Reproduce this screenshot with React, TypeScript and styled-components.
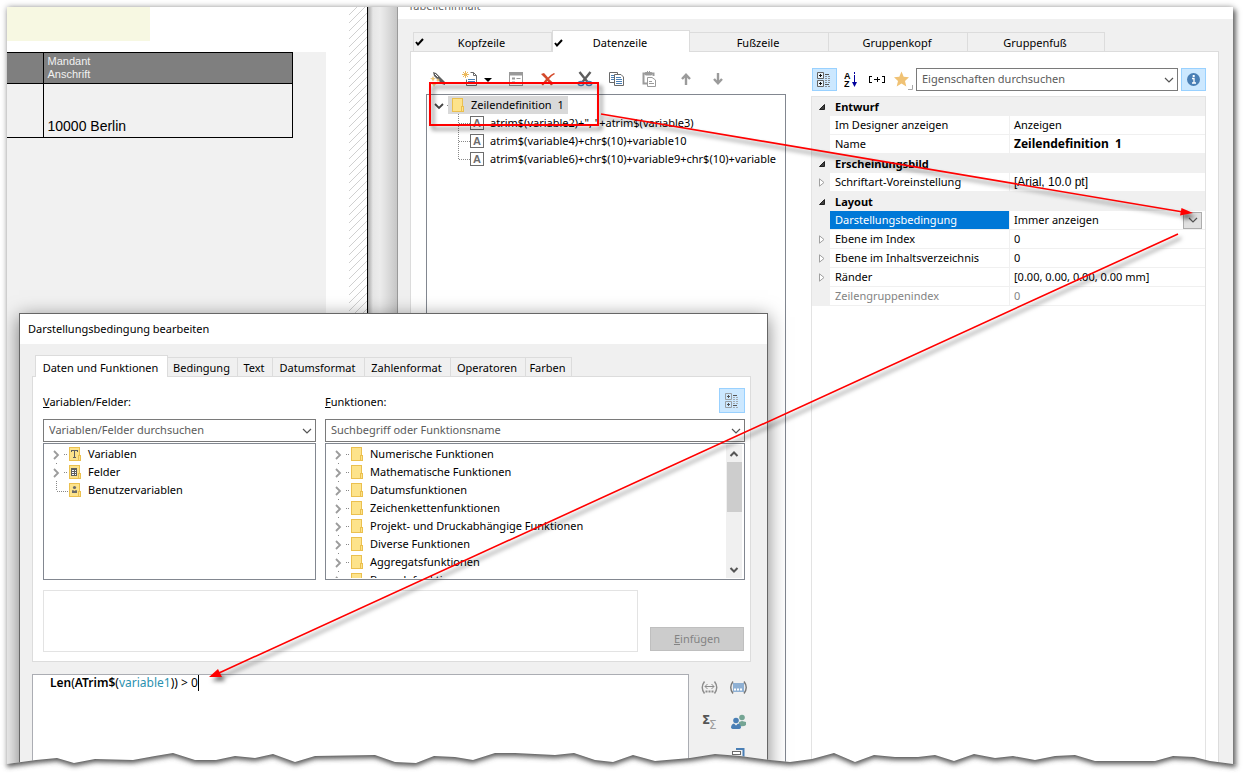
import React from 'react';
import styled, { createGlobalStyle, css } from 'styled-components';

const GlobalStyle = createGlobalStyle`
  *, *::before, *::after { box-sizing: border-box; }
  body { margin: 0; background: #fff; }
  body, button, input { font: 11px/16px 'Noto Sans', 'Open Sans', sans-serif; color: #000; }
  button { padding: 0; margin: 0; border: 0; background: none; cursor: default; }
  svg { display: block; flex: none; }
`;

/* ---------- page frame ---------- */

const Page = styled.div`
  position: relative;
  display: flex;
  height: 100vh;
  min-height: 700px;
  padding: 7px 12px 0 7px;
  overflow: hidden;
`;

const Capture = styled.main`
  position: relative;
  display: flex;
  flex: 1;
  min-width: 0;
  overflow: hidden;
`;

const Shade = styled.div`
  display: flex;
  flex: 1;
  min-width: 0;
  box-shadow: 0 0 6px rgba(0, 0, 0, 0.35), 3px 3px 5px rgba(0, 0, 0, 0.5);
`;

const TornEdge = styled.svg`
  position: absolute;
  left: 0;
  bottom: 0;
  width: 100%;
  height: 25px;
`;

const Annotations = styled.svg`
  position: absolute;
  left: 0;
  top: 0;
  width: 100%;
  height: 100%;
  pointer-events: none;
`;

/* ---------- report layout on the left ---------- */

const Report = styled.section`
  display: flex;
  flex: 0 0 361px;
  border-right: 1px solid #000;
  background: #fff;
  justify-content: space-between;
`;

const ReportSheet = styled.div`
  display: flex;
  flex-direction: column;
  width: 319px;
`;

const Highlight = styled.div`
  width: 143px;
  height: 34px;
  margin-bottom: 11px;
  background: #f7f8e2;
`;

const ReportBody = styled.div`
  flex: 1;
  background: #f1f1f1;
`;

const ReportTable = styled.table`
  width: 286px;
  border-collapse: collapse;
  font-family: 'Liberation Sans', Arial, sans-serif;
  th, td { border: 1px solid #000; padding: 0 4px; text-align: left; }
  th:first-child, td:first-child { width: 36px; border-left: 0; }
  th { height: 31px; padding-bottom: 1px; background: #7f7f7f; color: #f1f1f1; font: 11px/13px 'Liberation Sans', Arial, sans-serif; }
  td { height: 54px; padding-bottom: 3px; font-size: 14px; vertical-align: bottom; }
`;

const Gutter = styled.div`
  flex: 0 0 29px;
  background: linear-gradient(90deg, #a8a8a8, #e6e6e6 5px, #ececec 12px, #e0e0e0 18px, #c6c6c6);
`;

/* ---------- shared controls ---------- */

const TabStrip = styled.div`
  display: flex;
  align-items: flex-end;
  padding-left: 3px;
`;

const Tab = styled.button<{ $active?: boolean; $width: number }>`
  position: relative;
  display: flex;
  align-items: center;
  justify-content: center;
  flex: 0 1 ${p => p.$width}px;
  height: ${p => (p.$active ? 22 : 19)}px;
  margin-bottom: ${p => (p.$active ? -1 : 0)}px;
  padding: 2px 2px 0 0;
  white-space: nowrap;
  border: 1px solid #dcdcdc;
  border-bottom: 0;
  border-left-width: ${p => (p.$active ? 1 : 0)}px;
  background: ${p => (p.$active ? '#fff' : '#f0f0f0')};
  &:first-child { border-left-width: 1px; }
`;

const TabCheck = styled.svg`
  position: absolute;
  left: 1px;
  bottom: 5px;
`;

const IconButton = styled.button<{ $on?: boolean; $w?: number; $h?: number; $gap?: number }>`
  display: flex;
  align-items: center;
  justify-content: center;
  flex: none;
  width: ${p => p.$w ?? 32}px;
  height: ${p => p.$h ?? 23}px;
  margin-left: ${p => p.$gap ?? 0}px;
  ${p => p.$on && css`
    background: #cce8ff;
    border: 1px solid #99d1ff;
  `}
`;

const Combo = styled.div`
  display: flex;
  align-items: center;
  flex: 1;
  min-width: 0;
  height: 23px;
  border: 1px solid #7a7a7a;
  background: #fff;
  input {
    flex: 1;
    min-width: 0;
    height: 20px;
    padding: 0 5px 2px;
    border: 0;
    outline: 0;
    background: none;
  }
  input::placeholder { color: #5a5a5a; opacity: 1; }
`;

const TreeBox = styled.div`
  display: flex;
  border: 1px solid #828790;
  background: #fff;
  padding: 1px 1px 1px 0;
  overflow: hidden;
`;

const TreeList = styled.ul`
  flex: 1;
  min-width: 0;
  margin: 0;
  padding: 0;
  list-style: none;
  overflow: hidden;
`;

const TreeRow = styled.li<{ $child?: boolean }>`
  display: flex;
  align-items: center;
  height: 18px;
  padding-left: ${p => (p.$child ? 25 : 6)}px;
  white-space: pre;
`;

const TreeLabel = styled.span<{ $selected?: boolean; $gap: number }>`
  display: flex;
  align-items: center;
  gap: ${p => p.$gap}px;
  height: 18px;
  margin-left: -4px;
  padding: 0 4px;
  background: ${p => (p.$selected ? '#d9d9d9' : 'transparent')};
`;

/* ---------- table content window ---------- */

const ContentWindow = styled.section`
  display: flex;
  flex-direction: column;
  flex: 1;
  min-width: 0;
  border-left: 1px solid #9a9a9a;
  background: #f0f0f0;
`;

const ClippedTitle = styled.header`
  display: flex;
  align-items: flex-end;
  height: 12px;
  padding: 0 10px 5px;
  overflow: hidden;
  background: #fff;
  color: #6a6a6a;
`;

const WindowBody = styled.div`
  display: flex;
  flex-direction: column;
  flex: 1;
  padding: 11px 14px 0 12px;
`;

const Pane = styled.div`
  display: flex;
  flex: 1;
  gap: 25px;
  padding: 16px 12px 0 15px;
  border: 1px solid #dcdcdc;
  border-bottom: 0;
  background: #fff;
`;

const LinesColumn = styled.div`
  display: flex;
  flex-direction: column;
  flex: 0 0 360px;
  min-width: 0;
`;

const PropsColumn = styled.div`
  display: flex;
  flex-direction: column;
  flex: 1;
  min-width: 0;
`;

const Toolbar = styled.div`
  display: flex;
  align-items: flex-start;
  height: 21px;
  margin: 0 0 5px -4px;
`;

const PropToolbar = styled.div`
  display: flex;
  gap: 1px;
  margin-bottom: 5px;
  padding-left: 1px;
`;

const LinesTree = styled(TreeBox)`
  flex: 1;
`;

const PropBox = styled.div`
  flex: 1;
  border: 1px solid #e3e3e3;
  border-bottom: 0;
`;

const PropTable = styled.table`
  width: 100%;
  border-collapse: separate;
  border-spacing: 0;
  table-layout: fixed;
  td, th { height: 19px; padding: 0; text-align: left; white-space: pre; line-height: 16px; }
`;

const GutterCell = styled.td`
  width: 18px;
  background: #f0f0f0;
  svg { margin-left: 6px; }
`;

const GroupCell = styled.th`
  background: #f0f0f0;
  font-weight: 700;
  && { padding-left: 5px; }
`;

const NameCell = styled.td<{ $selected?: boolean; $dim?: boolean }>`
  width: 179px;
  border-bottom: 1px solid #f0f0f0;
  color: ${p => (p.$selected ? '#fff' : p.$dim ? '#838383' : '#000')};
  background: ${p => (p.$selected ? '#0078d7' : '#fff')};
  && { padding-left: 5px; }
`;

const ValueCell = styled.td<{ $bold?: boolean; $dim?: boolean; $arial?: boolean }>`
  border-bottom: 1px solid #f0f0f0;
  border-left: 1px solid #f0f0f0;
  color: ${p => (p.$dim ? '#838383' : '#000')};
  ${p => p.$bold && css`font-size: 12px; font-weight: 700;`}
  ${p => p.$arial && css`font: 12px/16px 'Liberation Sans', Arial, sans-serif;`}
  && { padding-left: 4px; }
`;

const ValueFlex = styled.div`
  display: flex;
  align-items: center;
  justify-content: space-between;
  padding-right: 3px;
  height: 18px;
`;

const DropButton = styled.button`
  display: flex;
  align-items: center;
  justify-content: center;
  width: 19px;
  height: 17px;
  border: 1px solid #adadad;
  background: #e1e1e1;
`;

/* ---------- condition dialog ---------- */

const Dialog = styled.section`
  position: absolute;
  left: 12px;
  top: 306px;
  bottom: 0;
  width: 749px;
  display: flex;
  flex-direction: column;
  border: 1px solid #666;
  background: #f0f0f0;
  box-shadow: 0 4px 18px rgba(0, 0, 0, 0.5);
`;

const DialogTitle = styled.h1`
  margin: 0;
  padding: 7px 8px;
  font: inherit;
  background: #fff;
`;

const DialogBody = styled.div`
  display: flex;
  flex-direction: column;
  flex: 1;
  padding: 11px 16px 0 12px;
`;

const DialogPane = styled.div`
  padding: 11px 5px 9px 10px;
  border: 1px solid #dcdcdc;
  background: #fff;
`;

const Pickers = styled.div`
  display: grid;
  grid-template-columns: 273px 1fr;
  column-gap: 9px;
`;

const Picker = styled.div`
  display: flex;
  flex-direction: column;
`;

const PickerHead = styled.div`
  display: flex;
  align-items: center;
  justify-content: space-between;
  height: 25px;
  margin-bottom: 6px;
  label { padding-top: 2px; }
`;

const PickerCombo = styled(Combo)`
  flex: none;
  margin-bottom: 1px;
`;

const PickerTree = styled(TreeBox)`
  height: 137px;
`;

const Scrollbar = styled.div`
  display: flex;
  flex-direction: column;
  align-items: center;
  width: 16px;
  margin: 0 1px 0 0;
  background: #f0f0f0;
`;

const ScrollThumb = styled.div`
  width: 15px;
  height: 50px;
  margin-top: 1px;
  margin-bottom: auto;
  background: #cdcdcd;
`;

const InsertRow = styled.div`
  display: flex;
  align-items: flex-end;
  gap: 12px;
  margin-top: 10px;
  padding-right: 1px;
`;

const Description = styled.div`
  flex: 1;
  height: 62px;
  border: 1px solid #e3e3e3;
`;

const InsertButton = styled.button`
  width: 94px;
  height: 24px;
  margin-bottom: 1px;
  border: 1px solid #bfbfbf;
  background: #ccc;
  color: #838383;
`;

const EditorRow = styled.div`
  display: flex;
  flex: 1;
  margin-top: 12px;
`;

const Editor = styled.div`
  flex: 1;
  padding: 0 17px;
  border: 1px solid #abadb3;
  border-bottom: 0;
  background: #fff;
  font-size: 12px;
  b { font-weight: 600; }
  em { font-style: normal; color: #2b91af; }
`;

const Formula = styled.span`
  display: inline-block;
  border-right: 1px solid #000;
`;

const EditorTools = styled.div`
  display: grid;
  grid-template-columns: 29px 29px;
  grid-auto-rows: 34px;
  width: 62px;
  padding-left: 6px;
  align-content: start;
  margin-top: -3px;
`;

/* ---------- icons ---------- */

const Check = () => (
  <TabCheck width="9" height="8" viewBox="0 0 9 8">
    <path d="M1 4 L3 6.5 L8 1" fill="none" stroke="#000" strokeWidth="2" />
  </TabCheck>
);

const Chevron = () => (
  <svg width="16" height="10" viewBox="0 0 16 10">
    <path d="M4 3 L8 7 L12 3" fill="none" stroke="#555" strokeWidth="1.2" />
  </svg>
);

const Folder = ({ kind }: { kind?: string }) => (
  <svg width="12" height="14" viewBox="0 0 12 14">
    <rect x=".5" y=".5" width="10" height="13" fill="#fde38b" stroke="#ebc04f" />
    <rect x="9.5" y="8.5" width="2" height="5" fill="#fde38b" stroke="#ebc04f" />
    {kind === 'text' && <path d="M2 3 H9 V5 H8 V4 H6 V10 H7 V11 H4 V10 H5 V4 H3 V5 H2 Z" fill="#5f5f5f" />}
    {kind === 'field' && (
      <g shapeRendering="crispEdges">
        <rect x="2" y="3" width="6" height="8" fill="#5f5f5f" />
        <path d="M3 5h2v1h-2z M6 5h1v1h-1z M3 7h2v1h-2z M6 7h1v1h-1z M3 9h2v1h-2z M6 9h1v1h-1z" fill="#fff" />
      </g>
    )}
    {kind === 'user' && (
      <g fill="#6a6a6a">
        <circle cx="5.5" cy="4.5" r="1.6" />
        <path d="M3 10 V8 Q3 7 4 7 L5.5 8 L7 7 Q8 7 8 8 V10 Z" />
      </g>
    )}
  </svg>
);

const Letter = () => (
  <svg width="14" height="14" viewBox="0 0 14 14">
    <rect x=".5" y=".5" width="13" height="13" fill="#fff" stroke="#6d6d6d" />
    <text x="7" y="11" textAnchor="middle" fontFamily="Liberation Sans" fontSize="11" fontWeight="700" fill="#6d6d6d">A</text>
  </svg>
);

type BranchKind = 'open' | 'closed' | 'end';

const Branch = ({ kind, first }: { kind: BranchKind; first?: boolean }) => (
  <svg width="19" height="18" viewBox="0 0 19 18" fill="none">
    {kind === 'open' && <path d="M2 8 L6 12 L10 8" stroke="#444" strokeWidth="1.8" />}
    {kind === 'closed' && <path d="M4 6 L8 10 L4 14" stroke="#9b9b9b" strokeWidth="1.8" />}
    {kind !== 'end' && <path d="M14 9.5 H18" stroke="#888" strokeDasharray="1 1" />}
    {kind === 'closed' && !first && <path d="M6 .5 H7" stroke="#888" />}
    {kind === 'end' && <path d="M6.5 0 V10 M7 10.5 H18" stroke="#888" strokeDasharray="1 1" />}
  </svg>
);

const ChildBranch = ({ last }: { last?: boolean }) => (
  <svg width="18" height="18" viewBox="0 0 18 18" fill="none">
    <path d={`M6.5 0 V${last ? 10 : 18} M7 9.5 H18`} stroke="#888" strokeDasharray="1 1" />
  </svg>
);

const WandIcon = () => (
  <svg width="16" height="16" viewBox="0 0 16 16">
    <path d="M3 1 L6 2 L15 11 V14 L12 13 L4 5 Z" fill="#5e5e5e" />
    <path d="M5 3 L8 6" stroke="#fff" />
    <path d="M3 5 l1 2 2 .5 -2 1 -1 2 -1 -2 -2 -1 2 -.5z M8 7 l.7 1.5 1.6 .4 -1.6.8 -.7 1.6 -.7 -1.6 -1.6 -.8 1.6 -.4z M4 11 l.8 1.6 1.8.5 -1.8.8 -.8 2 -.8 -2 -1.8 -.8 1.8 -.5z" fill="#ecc373" />
  </svg>
);

const NewIcon = () => (
  <svg width="16" height="16" viewBox="0 0 16 16" fill="none">
    <path d="M8.5 1.5 H11.5 L14.5 4.5 V14.5 H4.5 V8.5 M11.5 1.5 V4.5 H14.5" stroke="#6a6a6a" />
    <path d="M6 8.5 H13 M6 10.5 H13 M6 12.5 H13" stroke="#4a7fb5" />
    <path d="M3.5 0 V7 M0 3.5 H7 M1 1 L6 6 M6 1 L1 6" stroke="#ecb95c" />
  </svg>
);

const CaretIcon = () => (
  <svg width="8" height="16" viewBox="0 0 8 16"><path d="M0 7 H8 L4 11 Z" fill="#000" /></svg>
);

const PropsIcon = () => (
  <svg width="14" height="16" viewBox="0 0 14 16" fill="none" stroke="#999">
    <rect x=".5" y="1.5" width="13" height="13" />
    <path d="M0 3 H14" strokeWidth="3" />
    <path d="M3 7.5 H6 M3 11.5 H6" strokeWidth="2" />
    <path d="M7.5 7.5 H11.5 M7.5 11.5 H11.5" />
  </svg>
);

const DeleteIcon = () => (
  <svg width="16" height="16" viewBox="0 0 16 16">
    <path d="M1 3 L4 2 L8 6.5 Q11 3 14 2 L15 3 Q11 5 9 8 L14 12.5 L11 14.5 L7.5 10 Q5 12 3 14.5 L1.5 13.5 Q4 10.5 6 8 Z" fill="#d4492a" />
  </svg>
);

const CutIcon = () => (
  <svg width="16" height="16" viewBox="0 0 16 16" fill="none">
    <path d="M2.5 1 L10.5 11 M13.5 1 L5.5 11" stroke="#5e5e5e" strokeWidth="2.4" />
    <ellipse cx="4" cy="12.5" rx="2.7" ry="2" stroke="#4a7fb5" strokeWidth="1.6" />
    <ellipse cx="12" cy="12.5" rx="2.7" ry="2" stroke="#4a7fb5" strokeWidth="1.6" />
  </svg>
);

const CopyIcon = () => (
  <svg width="16" height="16" viewBox="0 0 16 16" fill="none">
    <path d="M5 11.5 H.5 V1.5 H8.5 V3" stroke="#6a6a6a" />
    <path d="M2 4.5 H5 M2 6.5 H5 M2 8.5 H5" stroke="#4a7fb5" />
    <path d="M5.5 3.5 H12 L14.5 6 V14.5 H5.5 Z" stroke="#6a6a6a" fill="#fff" />
    <path d="M7 6.5 H12 M7 8.5 H13 M7 10.5 H13 M7 12.5 H13" stroke="#4a7fb5" />
  </svg>
);

const PasteIcon = () => (
  <svg width="16" height="16" viewBox="0 0 16 16" fill="none" stroke="#9b9b9b">
    <path d="M6 12.5 H2.5 V2.5 H5 M10 2.5 H12.5 V5" strokeWidth="2" />
    <path d="M4.5 1.5 H10.5 V4 H4.5 Z M6.5 0 V2 M8.5 0 V2" fill="#9b9b9b" />
    <path d="M6.5 6.5 H11 L14.5 9 V15.5 H6.5 Z" fill="#fff" />
    <path d="M8 10.5 H11 M8 12.5 H13" />
  </svg>
);

const ArrowIcon = ({ down }: { down?: boolean }) => (
  <svg width="12" height="16" viewBox="0 0 12 16">
    <g transform={down ? 'rotate(180 6 8)' : undefined} fill="none" stroke="#9b9b9b" strokeWidth="2.4">
      <path d="M6 14 V4" />
      <path d="M2 8 L6 3.8 L10 8" />
    </g>
  </svg>
);

const CategoryIcon = ({ soft }: { soft?: boolean }) => (
  <svg width="15" height="16" viewBox="0 0 15 16" fill="none" stroke={soft ? '#9a9fa3' : '#666'}>
    <path d="M.5 .5 H6.5 V6.5 H.5 Z M.5 8.5 H6.5 V14.5 H.5 Z" fill={soft ? '#cce8ff' : '#e8f3fb'} />
    <path d="M2 3.5 H5 M3.5 2 V5 M2 11.5 H5 M3.5 10 V13" stroke={soft ? '#555' : '#111'} />
    <path d="M8 2.5 H12 M8 12.5 H12" stroke="#555" />
    <path d="M8 4.5 H14 M8 6.5 H14 M8 8.5 H14 M8 10.5 H14 M8 14.5 H14" strokeDasharray="2 1" stroke={soft ? '#a4abb1' : '#8a8f94'} />
  </svg>
);

const SortIcon = () => (
  <svg width="14" height="17" viewBox="0 0 14 17">
    <text x="0" y="8" fontFamily="Liberation Sans" fontSize="9" fontWeight="700">A</text>
    <text x="0" y="16" fontFamily="Liberation Sans" fontSize="9" fontWeight="700">Z</text>
    <path d="M10.5 1 V3 M10.5 4 V13" stroke="#00009c" />
    <path d="M8 11 H13 L10.5 16 Z" fill="#00009c" />
  </svg>
);

const BracketIcon = () => (
  <svg width="16" height="10" viewBox="0 0 16 10" fill="none" stroke="#000" shapeRendering="crispEdges">
    <path d="M3 1.5 H.5 V7.5 H3 M13 1.5 H15.5 V7.5 H13 M5 4.5 H11 M8 2 V7" />
  </svg>
);

const StarIcon = () => (
  <svg width="20" height="20" viewBox="0 0 20 20">
    <path d="M8.5 1.5 L10.7 6.8 L16 7.2 L12 10.9 L13.3 16.5 L8.5 13.5 L3.7 16.5 L5 10.9 L1 7.2 L6.3 6.8 Z" fill="#f0c274" />
    <path d="M19.5 15 V19.5 H15" fill="none" stroke="#a8a8a8" />
  </svg>
);

const InfoIcon = () => (
  <svg width="13" height="13" viewBox="0 0 13 13">
    <circle cx="6.5" cy="6.5" r="6.5" fill="#4a7fb5" />
    <path d="M5 5.5 H7 V10 M5 10 H9" stroke="#fff" strokeWidth="1.3" fill="none" />
    <rect x="5.7" y="2" width="2" height="2" fill="#fff" />
  </svg>
);

const Expanded = () => (
  <svg width="8" height="8" viewBox="0 0 8 8"><path d="M6.5 1.5 V6.5 H1.5 Z" fill="#404040" stroke="#222" /></svg>
);

const Collapsed = () => (
  <svg width="8" height="9" viewBox="0 0 8 9"><path d="M1.5 .8 L6 4.5 L1.5 8.2 Z" fill="#fff" stroke="#a0a0a0" /></svg>
);

const ScrollArrow = ({ down }: { down?: boolean }) => (
  <svg width="16" height="16" viewBox="0 0 16 16">
    <path d={down ? 'M4.5 6 L8 9.5 L11.5 6' : 'M4.5 11 L8 7.5 L11.5 11'} fill="none" stroke="#555" strokeWidth="2" />
  </svg>
);

const SpanIcon = () => (
  <svg width="17" height="14" viewBox="0 0 17 14" fill="none" stroke="#8c8c8c">
    <path d="M3.5 .5 Q-1 6.5 3.5 12.5 M13.5 .5 Q18 6.5 13.5 12.5" strokeWidth="1.4" />
    <path d="M4 5.5 H13 M6.5 3 L4 5.5 L6.5 8 M10.5 3 L13 5.5 L10.5 8" />
    <path d="M4.5 10.5 H13" strokeWidth="2" strokeDasharray="2 1" />
  </svg>
);

const FieldSpanIcon = () => (
  <svg width="17" height="14" viewBox="0 0 17 14" fill="none">
    <path d="M3 .5 Q-1.5 6.5 3 12.5 M14 .5 Q18.5 6.5 14 12.5" stroke="#777" strokeWidth="1.4" />
    <rect x="3" y="2" width="11" height="9" fill="#8fb0d3" />
    <path d="M4 8.5 H13" stroke="#fff" strokeWidth="2" strokeDasharray="2 1" />
  </svg>
);

const SumIcon = () => (
  <svg width="17" height="16" viewBox="0 0 17 16" fontFamily="DejaVu Sans">
    <text x="1" y="10" fontSize="12" fontWeight="700" fill="#555">Σ</text>
    <text x="8" y="15" fontSize="12" fill="#9b9b9b">Σ</text>
  </svg>
);

const PeopleIcon = () => (
  <svg width="16" height="16" viewBox="0 0 16 16">
    <circle cx="11" cy="3.5" r="2.8" fill="#75a594" />
    <path d="M8 12 V8 L11 7 L15 8 V11 Q13 13 8 12Z" fill="#75a594" />
    <circle cx="5" cy="6.5" r="2.8" fill="#4a7fb5" />
    <path d="M0 14 Q0 10 3 9.5 L5 11.5 L7 9.5 Q10 10 10 14 L8.5 15 H1.5 Z" fill="#4a7fb5" />
  </svg>
);

const StackIcon = () => (
  <svg width="16" height="16" viewBox="0 0 16 16" fill="none">
    <path d="M5 1 H12.5 V14" stroke="#4a7fb5" strokeWidth="2" />
    <rect x="1.5" y="3.5" width="8" height="3" fill="#fff" stroke="#6a6a6a" />
    <path d="M4 10.5 H10" stroke="#4a7fb5" />
  </svg>
);

const Hatching = () => (
  <svg width="18" height="100%">
    <defs>
      <pattern id="hatch" width="8" height="8" patternUnits="userSpaceOnUse">
        <path d="M-1 9 L9 -1 M-1 1 L1 -1 M7 9 L9 7" stroke="#c4c4c4" strokeWidth=".8" />
      </pattern>
    </defs>
    <rect width="18" height="100%" fill="url(#hatch)" />
  </svg>
);

/* ---------- data ---------- */

const functionGroups = [
  'Numerische Funktionen', 'Mathematische Funktionen', 'Datumsfunktionen', 'Zeichenkettenfunktionen',
  'Projekt- und Druckabhängige Funktionen', 'Diverse Funktionen', 'Aggregatsfunktionen', 'Barcodefunktionen',
];

const lines = [
  'atrim$(variable2)+", "+atrim$(variable3)',
  'atrim$(variable4)+chr$(10)+variable10',
  'atrim$(variable6)+chr$(10)+variable9+chr$(10)+variable',
];

const dialogTabs: [string, number][] = [
  ['Daten und Funktionen', 133], ['Bedingung', 70], ['Text', 35], ['Datumsformat', 92],
  ['Zahlenformat', 86], ['Operatoren', 75], ['Farben', 46],
];

type Prop = {
  group?: string; name?: string; value?: string;
  open?: boolean; bold?: boolean; dim?: boolean; arial?: boolean; selected?: boolean;
};

const properties: Prop[] = [
  { group: 'Entwurf' },
  { name: 'Im Designer anzeigen', value: 'Anzeigen' },
  { name: 'Name', value: 'Zeilendefinition  1', bold: true },
  { group: 'Erscheinungsbild' },
  { name: 'Schriftart-Voreinstellung', value: '[Arial, 10.0 pt]', open: true, arial: true },
  { group: 'Layout' },
  { name: 'Darstellungsbedingung', value: 'Immer anzeigen', selected: true },
  { name: 'Ebene im Index', value: '0', open: true },
  { name: 'Ebene im Inhaltsverzeichnis', value: '0', open: true },
  { name: 'Ränder', value: '[0.00, 0.00, 0.00, 0.00 mm]', open: true },
  { name: 'Zeilengruppenindex', value: '0', dim: true },
];

const tear =
  'L1245 766 L1233 764 L1210 761 L1194 757 L1173 756 L1155 761 L1095 761 L1075 755 L1055 756 L1035 760 L1013 756 L995 758 L974 754 L954 761 L935 755 L918 757 L895 757 L874 755 L855 762 L834 753 L812 759 L790 762 L770 760 L740 756 L715 754 L690 758 L655 761 L633 755 L613 762 L595 760 L574 753 L555 755 L515 753 L495 753 L473 760 L455 757 L434 756 L416 763 L395 762 L375 755 L315 756 L295 762 L273 754 L255 758 L235 756 L216 760 L195 760 L173 753 L155 756 L133 760 L95 759 L74 763 L57 758 L36 760 L7 764 L0 765';

/* ---------- sections ---------- */

const ReportView = () => (
  <Report>
    <ReportSheet>
      <Highlight />
      <ReportBody>
        <ReportTable>
          <thead><tr><th /><th>Mandant<br />Anschrift</th></tr></thead>
          <tbody><tr><td /><td>10000 Berlin</td></tr></tbody>
        </ReportTable>
      </ReportBody>
    </ReportSheet>
    <Hatching />
  </Report>
);

const ContentTools = () => (
  <Toolbar>
    <IconButton $h={21} aria-label="Assistent"><WandIcon /></IconButton>
    <IconButton $h={21} aria-label="Neu" $w={46}><NewIcon />&nbsp;&nbsp;<CaretIcon /></IconButton>
    <IconButton $h={21} aria-label="Eigenschaften"><PropsIcon /></IconButton>
    <IconButton $h={21} aria-label="Löschen"><DeleteIcon /></IconButton>
    <IconButton $h={21} aria-label="Ausschneiden" $gap={5}><CutIcon /></IconButton>
    <IconButton $h={21} aria-label="Kopieren"><CopyIcon /></IconButton>
    <IconButton $h={21} aria-label="Einfügen"><PasteIcon /></IconButton>
    <IconButton $h={21} aria-label="Nach oben" $gap={5}><ArrowIcon /></IconButton>
    <IconButton $h={21} aria-label="Nach unten"><ArrowIcon down /></IconButton>
  </Toolbar>
);

const PropertyGrid = () => (
  <PropBox>
    <PropTable>
      <colgroup><col style={{ width: 18 }} /><col style={{ width: 179 }} /><col /></colgroup>
      <tbody>
        {properties.map(p =>
          p.group ? (
            <tr key={p.group}>
              <GutterCell><Expanded /></GutterCell>
              <GroupCell colSpan={2}>{p.group}</GroupCell>
            </tr>
          ) : (
            <tr key={p.name}>
              <GutterCell>{p.open && <Collapsed />}</GutterCell>
              <NameCell $selected={p.selected} $dim={p.dim}>{p.name}</NameCell>
              <ValueCell $bold={p.bold} $dim={p.dim} $arial={p.arial}>
                {p.selected ? (
                  <ValueFlex>
                    {p.value}
                    <DropButton aria-label="Auswahl öffnen"><Chevron /></DropButton>
                  </ValueFlex>
                ) : p.value}
              </ValueCell>
            </tr>
          )
        )}
      </tbody>
    </PropTable>
  </PropBox>
);

const TableContent = () => (
  <ContentWindow>
    <ClippedTitle>Tabelleninhalt</ClippedTitle>
    <WindowBody>
      <TabStrip role="tablist">
        <Tab role="tab" $width={139}><Check />Kopfzeile</Tab>
        <Tab role="tab" $width={138} $active><Check />Datenzeile</Tab>
        <Tab role="tab" $width={139}>Fußzeile</Tab>
        <Tab role="tab" $width={139}>Gruppenkopf</Tab>
        <Tab role="tab" $width={137}>Gruppenfuß</Tab>
      </TabStrip>
      <Pane>
        <LinesColumn>
          <ContentTools />
          <LinesTree>
            <TreeList>
              <TreeRow>
                <Branch kind="open" />
                <TreeLabel $selected $gap={7}><Folder />Zeilendefinition  1</TreeLabel>
              </TreeRow>
              {lines.map((line, i) => (
                <TreeRow key={line} $child>
                  <ChildBranch last={i === lines.length - 1} />
                  <TreeLabel $gap={6}><Letter />{line}</TreeLabel>
                </TreeRow>
              ))}
            </TreeList>
          </LinesTree>
        </LinesColumn>
        <PropsColumn>
          <PropToolbar>
            <IconButton $on $w={25} aria-label="Nach Kategorie"><CategoryIcon /></IconButton>
            <IconButton $w={25} aria-label="Alphabetisch"><SortIcon /></IconButton>
            <IconButton $w={25} aria-label="Aufklappen"><BracketIcon /></IconButton>
            <IconButton $w={25} aria-label="Favoriten"><StarIcon /></IconButton>
            <Combo>
              <input aria-label="Eigenschaften durchsuchen" placeholder="Eigenschaften durchsuchen" />
              <button aria-label="Liste öffnen"><Chevron /></button>
            </Combo>
            <IconButton $on $w={25} $gap={2} aria-label="Info"><InfoIcon /></IconButton>
          </PropToolbar>
          <PropertyGrid />
        </PropsColumn>
      </Pane>
    </WindowBody>
  </ContentWindow>
);

const ConditionDialog = () => (
  <Dialog role="dialog" aria-label="Darstellungsbedingung bearbeiten">
    <DialogTitle>Darstellungsbedingung bearbeiten</DialogTitle>
    <DialogBody>
      <TabStrip role="tablist">
        {dialogTabs.map(([label, width], i) => (
          <Tab key={label} role="tab" $width={width} $active={i === 0}>{label}</Tab>
        ))}
      </TabStrip>
      <DialogPane>
        <Pickers>
          <Picker>
            <PickerHead><label htmlFor="fields"><u>V</u>ariablen/Felder:</label></PickerHead>
            <PickerCombo>
              <input id="fields" placeholder="Variablen/Felder durchsuchen" />
              <button aria-label="Liste öffnen"><Chevron /></button>
            </PickerCombo>
            <PickerTree>
              <TreeList>
                <TreeRow><Branch kind="closed" first /><TreeLabel $gap={7}><Folder kind="text" />Variablen</TreeLabel></TreeRow>
                <TreeRow><Branch kind="closed" /><TreeLabel $gap={7}><Folder kind="field" />Felder</TreeLabel></TreeRow>
                <TreeRow><Branch kind="end" /><TreeLabel $gap={7}><Folder kind="user" />Benutzervariablen</TreeLabel></TreeRow>
              </TreeList>
            </PickerTree>
          </Picker>
          <Picker>
            <PickerHead>
              <label htmlFor="functions"><u>F</u>unktionen:</label>
              <IconButton $on $w={26} $h={25} aria-label="Nach Kategorie"><CategoryIcon soft /></IconButton>
            </PickerHead>
            <PickerCombo>
              <input id="functions" placeholder="Suchbegriff oder Funktionsname" />
              <button aria-label="Liste öffnen"><Chevron /></button>
            </PickerCombo>
            <PickerTree>
              <TreeList>
                {functionGroups.map((name, i) => (
                  <TreeRow key={name}>
                    <Branch kind="closed" first={i === 0} />
                    <TreeLabel $gap={7}><Folder />{name}</TreeLabel>
                  </TreeRow>
                ))}
              </TreeList>
              <Scrollbar><ScrollArrow /><ScrollThumb /><ScrollArrow down /></Scrollbar>
            </PickerTree>
          </Picker>
        </Pickers>
        <InsertRow>
          <Description />
          <InsertButton disabled><u>E</u>infügen</InsertButton>
        </InsertRow>
      </DialogPane>
      <EditorRow>
        <Editor role="textbox" aria-label="Formel">
          <Formula><b>Len</b>(<b>ATrim$</b>(<em>variable1</em>)) &gt; 0</Formula>
        </Editor>
        <EditorTools>
          <IconButton $w={29} $h={34} aria-label="Bereich"><SpanIcon /></IconButton>
          <IconButton $w={29} $h={34} aria-label="Feldbereich"><FieldSpanIcon /></IconButton>
          <IconButton $w={29} $h={34} aria-label="Summen"><SumIcon /></IconButton>
          <IconButton $w={29} $h={34} aria-label="Benutzer"><PeopleIcon /></IconButton>
          <span />
          <IconButton $w={29} $h={34} aria-label="Ebenen"><StackIcon /></IconButton>
        </EditorTools>
      </EditorRow>
    </DialogBody>
  </Dialog>
);

const Marks = () => (
  <Annotations aria-hidden="true">
    <g fill="none" stroke="#f00" strokeWidth="2" style={{ filter: 'drop-shadow(3px 4px 2px rgba(0,0,0,.55))' }}>
      <rect x="430" y="83" width="168" height="42" />
      <path d="M601 114 L1183 212" strokeWidth="1.6" />
      <path d="M1193 213 L1180 215.5 L1181.5 208 Z" fill="#f00" stroke="none" />
      <path d="M1178 234 L219 673" strokeWidth="1.6" />
      <path d="M209 677 L218 669 L222 677 Z" fill="#f00" stroke="none" />
    </g>
  </Annotations>
);

const Tear = () => (
  <TornEdge viewBox="0 750 1245 25" preserveAspectRatio="none" aria-hidden="true">
    <defs>
      <clipPath id="below"><path d={`M0 776 L1245 776 ${tear} Z`} /></clipPath>
      <filter id="soften" x="-5%" y="-100%" width="110%" height="300%"><feGaussianBlur stdDeviation="2.5" /></filter>
    </defs>
    <g clipPath="url(#below)">
      <rect y="750" width="1245" height="25" fill="#fff" />
      <path d={`M7 730 L1236 730 L1236 764 ${tear.replace('L1245 766 ', '').replace(' L0 765', '')} Z`} fill="#555" filter="url(#soften)" transform="translate(0 3)" />
    </g>
  </TornEdge>
);

export default function App() {
  return (
    <>
      <GlobalStyle />
      <Page>
        <Shade>
          <Capture>
            <ReportView />
            <Gutter />
            <TableContent />
            <ConditionDialog />
          </Capture>
        </Shade>
        <Marks />
        <Tear />
      </Page>
    </>
  );
}
